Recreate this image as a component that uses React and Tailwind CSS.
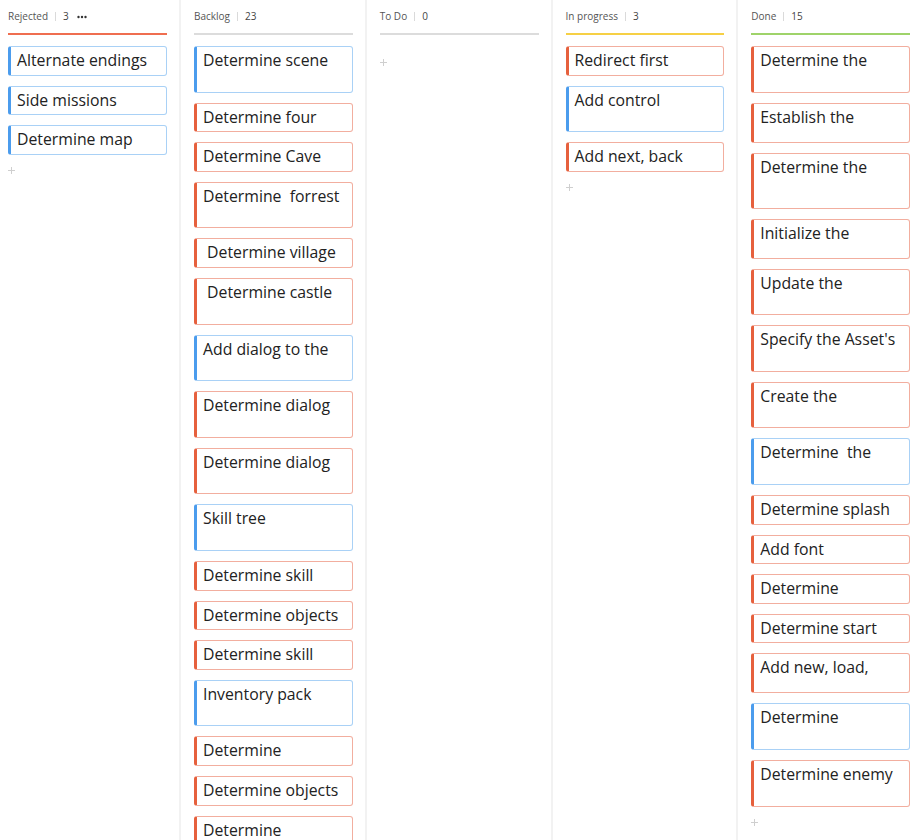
import React from 'react';

const H = {
    s: 'h-[29.6px]',
    m: 'h-[40px]',
    t: 'h-[46.6px]',
    x: 'h-[56px]',
};

const columns = [
    {
        title: 'Rejected',
        count: 3,
        more: true,
        line: 'bg-[#ef6e50]',
        cards: [
            ['Alternate endings', 'b', 's'],
            ['Side missions', 'b', 's'],
            ['Determine map', 'b', 's'],
        ],
    },
    {
        title: 'Backlog',
        count: 23,
        line: 'bg-[#dcdcdc]',
        cards: [
            ['Determine scene', 'b', 't'],
            ['Determine four', 'r', 's'],
            ['Determine Cave', 'r', 's'],
            ['Determine  forrest', 'r', 't'],
            [' Determine village', 'r', 's'],
            [' Determine castle', 'r', 't'],
            ['Add dialog to the', 'b', 't'],
            ['Determine dialog', 'r', 't'],
            ['Determine dialog', 'r', 't'],
            ['Skill tree', 'b', 't'],
            ['Determine skill', 'r', 's'],
            ['Determine objects', 'r', 's'],
            ['Determine skill', 'r', 's'],
            ['Inventory pack', 'b', 't'],
            ['Determine', 'r', 's'],
            ['Determine objects', 'r', 's'],
            ['Determine', 'r', 't'],
        ],
    },
    {
        title: 'To Do',
        count: 0,
        line: 'bg-[#dcdcdc]',
        cards: [],
    },
    {
        title: 'In progress',
        count: 3,
        line: 'bg-[#f6d045]',
        cards: [
            ['Redirect first', 'r', 's'],
            ['Add control', 'b', 't'],
            ['Add next, back', 'r', 's'],
        ],
    },
    {
        title: 'Done',
        count: 15,
        line: 'bg-[#9fd36a]',
        cards: [
            ['Determine the', 'r', 't'],
            ['Establish the', 'r', 'm'],
            ['Determine the', 'r', 'x'],
            ['Initialize the', 'r', 'm'],
            ['Update the', 'r', 't'],
            ["Specify the Asset's", 'r', 't'],
            ['Create the', 'r', 't'],
            ['Determine  the', 'b', 't'],
            ['Determine splash', 'r', 's'],
            ['Add font', 'r', 's'],
            ['Determine', 'r', 's'],
            ['Determine start', 'r', 's'],
            ['Add new, load,', 'r', 'm'],
            ['Determine', 'b', 't'],
            ['Determine enemy', 'r', 't'],
        ],
    },
];

const Card = ({ text, tone, size }) => (
    <div
        className={[
            'shrink-0 overflow-hidden rounded-[3px] border bg-white pl-[6px] pt-[3px] text-[15.8px] leading-[20px] whitespace-pre text-[#222]',
            tone === 'b'
                ? 'border-[#a9d1f6] border-l-[3px] border-l-[#4b9ced]'
                : 'border-[#f2ae9f] border-l-[3px] border-l-[#e6603d]',
            H[size],
        ].join(' ')}
    >
        {text}
    </div>
);

const Column = ({ col, first }) => (
    <div className={first ? 'w-[179px] shrink-0 pl-[8px] pr-[12px]' : 'w-[183.75px] shrink-0 pl-[13px] pr-[12px]'}>
        {/* Header */}
        <div className="h-[33px] flex items-center text-[10px] text-[#555]">
            <span>{col.title}</span>
            <span className="mx-[7px] h-[9px] w-px bg-[#dadada]" />
            <span className="text-[#444]">{col.count}</span>
            {col.more && (
                <svg className="ml-[8px]" width="10" height="4" viewBox="0 0 10 4">
                    <circle cx="1.5" cy="2" r="1.2" fill="#333" />
                    <circle cx="5" cy="2" r="1.2" fill="#333" />
                    <circle cx="8.5" cy="2" r="1.2" fill="#333" />
                </svg>
            )}
        </div>
        <div className={`h-[1.5px] ${col.line}`} />

        {/* Cards */}
        <div className="mt-[11.5px] flex flex-col gap-[10px]">
            {col.cards.map(([text, tone, size], i) => (
                <Card key={i} text={text} tone={tone} size={size} />
            ))}
        </div>
        <div className="mt-[9px] h-[14px] flex items-center">
            <svg width="7" height="7" viewBox="0 0 7 7">
                <path d="M3.5 0v7M0 3.5h7" stroke="#cfcfcf" strokeWidth="1" />
            </svg>
        </div>
    </div>
);

export default function App() {
    return (
        <div className="h-[840px] w-[916px] overflow-hidden bg-white font-['Open_Sans',sans-serif]">
            <div className="flex h-full">
                {columns.map((col, idx) => (
                    <React.Fragment key={col.title}>
                        {idx > 0 && <div className="w-[2px] shrink-0 bg-[#f2f2f2]" />}
                        <Column col={col} first={idx === 0} />
                    </React.Fragment>
                ))}
            </div>
        </div>
    );
}
